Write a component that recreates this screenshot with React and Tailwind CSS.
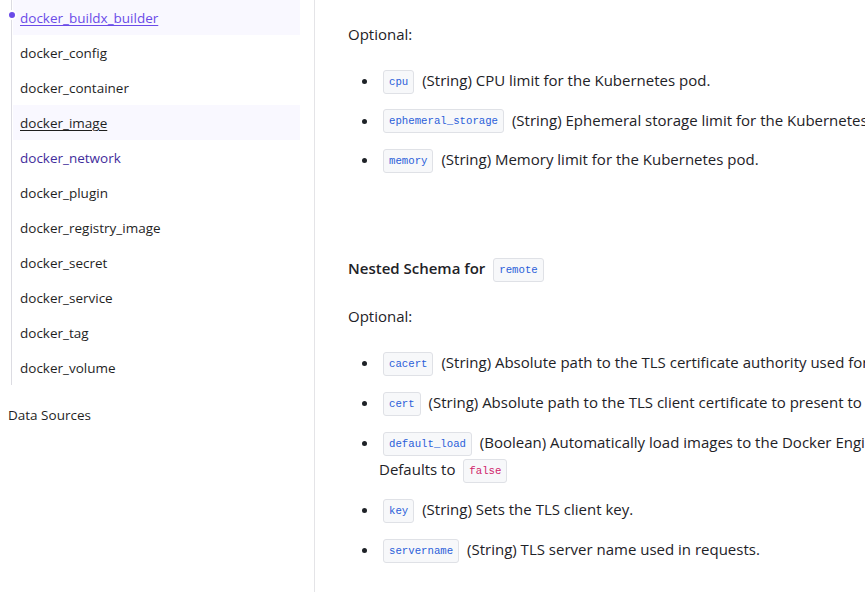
const resources = [
  'docker_buildx_builder',
  'docker_config',
  'docker_container',
  'docker_image',
  'docker_network',
  'docker_plugin',
  'docker_registry_image',
  'docker_secret',
  'docker_service',
  'docker_tag',
  'docker_volume',
]

function Code({ children, red }) {
  return (
    <code
      className={`mx-[4px] inline-block rounded-[3px] border border-[#dfe1e6] bg-[#f7f8fa] px-[5px] align-middle font-['Liberation_Mono',monospace] text-[10.7px] font-normal leading-[22px] ${
        red ? 'text-[#d0246b]' : 'text-[#2b5fd9]'
      }`}
    >
      {children}
    </code>
  )
}

function NavItem({ name }) {
  const active = name === 'docker_buildx_builder'
  const hover = name === 'docker_image'
  const visited = name === 'docker_network'
  return (
    <li
      className={`relative flex h-[35px] items-center px-[7px] pt-[2px] ${
        active || hover ? 'bg-[#f9f8ff]' : ''
      }`}
    >
      {active && (
        <span className="absolute left-[-6px] top-[10px] h-[10px] w-[10px] rounded-full border-2 border-white bg-[#6a4be8]" />
      )}
      <span
        className={
          active
            ? 'text-[#6a4be8] underline underline-offset-2'
            : hover
              ? 'text-[#1f1f1f] underline underline-offset-2'
              : visited
                ? 'text-[#3f2d9c]'
                : 'text-[#1f1f1f]'
        }
      >
        {name}
      </span>
    </li>
  )
}

export default function App() {
  return (
    <div className="flex h-[592px] w-[865px] overflow-hidden bg-white font-['Open_Sans',sans-serif] text-[13.5px] text-[#1f1f1f]">
      <aside className="w-[315px] shrink-0 border-r border-[#e4e4e7] pr-[14px]">
        <ul className="ml-[11px] border-l border-[#dcdce2] pl-px">
          {resources.map((r) => (
            <NavItem key={r} name={r} />
          ))}
        </ul>
        <div className="mt-[13px] flex h-[35px] items-center pl-[8px]">Data Sources</div>
      </aside>

      <main className="min-w-0 flex-1 overflow-hidden pl-[33px]">
        <div className="w-[700px] text-[15px] leading-[27px] text-[#1e2227]">
          <p className="mt-[21px]">Optional:</p>
          <ul className="mt-[19px] flex list-disc flex-col gap-[12.5px] whitespace-nowrap pl-[31px]">
            <li>
              <Code>cpu</Code> (String) CPU limit for the Kubernetes pod.
            </li>
            <li>
              <Code>ephemeral_storage</Code> (String) Ephemeral storage limit for the Kubernetes pod.
            </li>
            <li>
              <Code>memory</Code> (String) Memory limit for the Kubernetes pod.
            </li>
          </ul>

          <h4 className="mt-[82px] font-semibold">
            Nested Schema for <Code>remote</Code>
          </h4>

          <p className="mt-[21px]">Optional:</p>
          <ul className="mt-[19px] flex list-disc flex-col gap-[13px] whitespace-nowrap pl-[31px]">
            <li>
              <Code>cacert</Code> (String) Absolute path to the TLS certificate authority used for TLS connections.
            </li>
            <li>
              <Code>cert</Code> (String) Absolute path to the TLS client certificate to present to the server.
            </li>
            <li>
              <Code>default_load</Code> (Boolean) Automatically load images to the Docker Engine.
              <br />
              Defaults to <Code red>false</Code>
            </li>
            <li>
              <Code>key</Code> (String) Sets the TLS client key.
            </li>
            <li>
              <Code>servername</Code> (String) TLS server name used in requests.
            </li>
          </ul>
        </div>
      </main>
    </div>
  )
}
